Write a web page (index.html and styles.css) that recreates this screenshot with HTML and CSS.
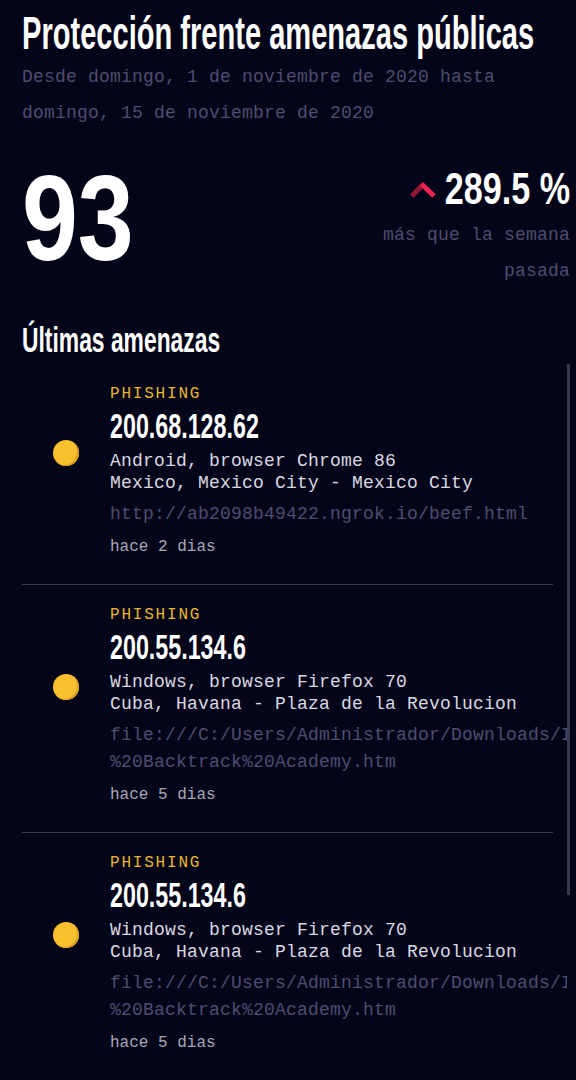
FILE: index.html
```html
<!DOCTYPE html>
<html lang="es">
<head>
<meta charset="utf-8">
<title>Protección frente amenazas públicas</title>
<link rel="stylesheet" href="styles.css">
</head>
<body>
<div class="page">
  <header class="head">
    <h1 class="title"><span class="cond">Protección frente amenazas públicas</span></h1>
    <p class="range">Desde domingo, 1 de noviembre de 2020 hasta domingo, 15 de noviembre de 2020</p>
  </header>

  <section class="stats">
    <div class="total"><span class="cond">93</span></div>
    <div class="change">
      <div class="pct">
        <svg class="chev" width="28" height="20" viewBox="0 0 28 20" aria-hidden="true">
          <line x1="3" y1="17" x2="14.5" y2="5" stroke="#8c1834" stroke-width="5"/>
          <line x1="12.5" y1="5" x2="25" y2="17" stroke="#ea2450" stroke-width="5"/>
        </svg>
        <span class="cond pct-value">289.5 %</span>
      </div>
      <p class="note">más que la semana pasada</p>
    </div>
  </section>

  <h2 class="section-title"><span class="cond">Últimas amenazas</span></h2>

  <div class="list-wrap">
    <section class="list">
      <article class="threat">
        <span class="dot"></span>
        <div class="info">
          <div class="type">PHISHING</div>
          <div class="ip"><span class="cond">200.68.128.62</span></div>
          <div class="meta">
            <div>Android, browser Chrome 86</div>
            <div>Mexico, Mexico City - Mexico City</div>
          </div>
          <div class="url">http://ab2098b49422.ngrok.io/beef.html</div>
          <div class="ago">hace 2 dias</div>
        </div>
      </article>

      <article class="threat">
        <span class="dot"></span>
        <div class="info">
          <div class="type">PHISHING</div>
          <div class="ip"><span class="cond">200.55.134.6</span></div>
          <div class="meta">
            <div>Windows, browser Firefox 70</div>
            <div>Cuba, Havana - Plaza de la Revolucion</div>
          </div>
          <div class="url">file:///C:/Users/Administrador/Downloads/Introduccion %20Backtrack%20Academy.htm</div>
          <div class="ago">hace 5 dias</div>
        </div>
      </article>

      <article class="threat">
        <span class="dot"></span>
        <div class="info">
          <div class="type">PHISHING</div>
          <div class="ip"><span class="cond">200.55.134.6</span></div>
          <div class="meta">
            <div>Windows, browser Firefox 70</div>
            <div>Cuba, Havana - Plaza de la Revolucion</div>
          </div>
          <div class="url">file:///C:/Users/Administrador/Downloads/Introduccion %20Backtrack%20Academy.htm</div>
          <div class="ago">hace 5 dias</div>
        </div>
      </article>
    </section>
    <div class="thumb"></div>
  </div>
</div>
</body>
</html>
```

FILE: styles.css
```css
html, body {
  margin: 0;
  height: 100%;
  overflow: hidden;
  background: #05051a;
}

body {
  font-family: "Liberation Mono", "DejaVu Sans Mono", monospace;
  color: #ffffff;
}

.page {
  height: 100%;
  box-sizing: border-box;
  padding: 8px 6px 0 22px;
  display: flex;
  flex-direction: column;
}

/* condensed display face: Liberation Sans squeezed horizontally */
.cond {
  display: inline-block;
  white-space: nowrap;
  transform-origin: left center;
}

.title {
  margin: 0;
  font: 700 46px/51px "Liberation Sans", Arial, sans-serif;
  white-space: nowrap;
}

.title .cond {
  transform: scaleX(0.632);
}

.range {
  margin: 0;
  font-size: 18px;
  line-height: 36px;
  letter-spacing: 0.2px;
  color: #4d4d70;
}

.stats {
  display: flex;
  justify-content: space-between;
  margin-top: 32px;
}

.total {
  font: 700 121px/110px "Liberation Sans", Arial, sans-serif;
}

.total .cond {
  transform: scaleX(0.83);
}

.change {
  padding-top: 4px;
  display: flex;
  flex-direction: column;
  align-items: flex-end;
}

.pct {
  display: flex;
  align-items: center;
  margin-bottom: 6px;
  font: 700 45px/44px "Liberation Sans", Arial, sans-serif;
}

.chev {
  display: block;
  margin-right: -32px;
}

.pct-value {
  transform-origin: right center;
  transform: scaleX(0.76);
}

.note {
  margin: 0;
  max-width: 200px;
  text-align: right;
  font-size: 18px;
  line-height: 36px;
  letter-spacing: 0.2px;
  color: #4d4d70;
}

.section-title {
  margin: 31px 0 4px;
  font: 700 35px/40px "Liberation Sans", Arial, sans-serif;
  white-space: nowrap;
}

.section-title .cond {
  transform: scaleX(0.653);
}

.list-wrap {
  position: relative;
  flex: 1;
  min-height: 0;
  padding-right: 3px;
}

.list {
  height: 100%;
  overflow: hidden;
}

.thumb {
  position: absolute;
  top: 0;
  right: 0;
  width: 3px;
  height: 531px;
  background: #383853;
}

.threat {
  display: flex;
  align-items: center;
  gap: 31px;
  padding: 20px 0 26px 31px;
  margin-right: 14px;
  border-bottom: 1px solid #3a3a56;
}

.dot {
  flex: none;
  width: 26px;
  height: 26px;
  margin-bottom: 37px;
  border-radius: 50%;
  background: #fbc02d;
  box-shadow: inset -2px -1px 0 #d99e22;
}

.info {
  min-width: 0;
}

.type {
  font-size: 16px;
  line-height: 20px;
  letter-spacing: 1.8px;
  color: #e9b632;
}

.ip {
  font: 700 35px/44px "Liberation Sans", Arial, sans-serif;
  white-space: nowrap;
}

.ip .cond {
  transform: scaleX(0.665);
}

.meta {
  margin-top: 2px;
  font-size: 18px;
  line-height: 22px;
  letter-spacing: 0.2px;
  color: #d9d9e2;
}

.url {
  margin-top: 7px;
  font-size: 18px;
  line-height: 27px;
  letter-spacing: 0.2px;
  color: #4d4d70;
}

.ago {
  margin-top: 8px;
  font-size: 16px;
  line-height: 22px;
  color: #a9a9b6;
}
```
